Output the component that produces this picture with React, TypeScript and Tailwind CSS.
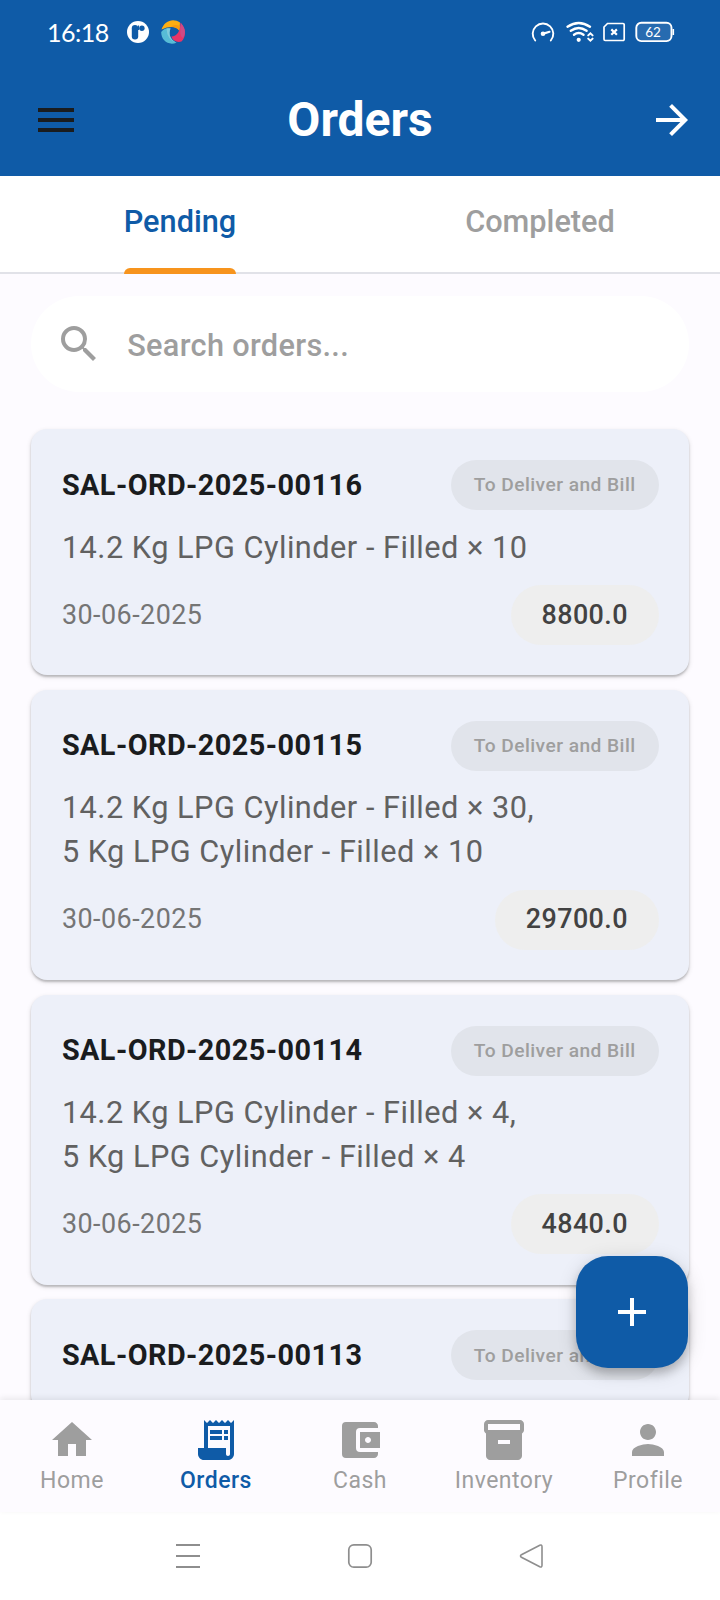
import { MdMenu, MdArrowForward, MdSearch, MdHome, MdReceiptLong, MdAccountBalanceWallet, MdInventory2, MdPerson, MdAdd } from "react-icons/md";

type Order = { id: string; items?: string[]; date?: string; total?: string };

const orders: Order[] = [
  { id: "SAL-ORD-2025-00116", items: ["14.2 Kg LPG Cylinder - Filled × 10"], date: "30-06-2025", total: "8800.0" },
  { id: "SAL-ORD-2025-00115", items: ["14.2 Kg LPG Cylinder - Filled × 30,", "5 Kg LPG Cylinder - Filled × 10"], date: "30-06-2025", total: "29700.0" },
  { id: "SAL-ORD-2025-00114", items: ["14.2 Kg LPG Cylinder - Filled × 4,", "5 Kg LPG Cylinder - Filled × 4"], date: "30-06-2025", total: "4840.0" },
  { id: "SAL-ORD-2025-00113" },
];

const navItems = [
  { label: "Home", Icon: MdHome },
  { label: "Orders", Icon: MdReceiptLong, active: true },
  { label: "Cash", Icon: MdAccountBalanceWallet },
  { label: "Inventory", Icon: MdInventory2 },
  { label: "Profile", Icon: MdPerson },
];

function StatusBar() {
  return (
    <div className="flex h-16 items-center pl-[47px] pr-[45px] text-white">
      <span className="w-[80px] font-['Lato',sans-serif] text-[25px] leading-none tracking-[-0.5px]">16:18</span>
      <svg className="h-[22px] w-[22px]" viewBox="0 0 22 22">
        <circle cx="11" cy="11" r="11" fill="#fff" />
        <rect x="4.800" y="4" width="6.400" height="14.500" rx="3.200" fill="#0f5ba7" />
        <path d="M11.500 4.500V9" stroke="#0f5ba7" strokeWidth="1.200" />
        <circle cx="14.900" cy="7.200" r="2.700" fill="#0f5ba7" />
      </svg>
      <svg className="ml-[12px] h-6 w-6" viewBox="0 0 24 24">
        <path d="M0.500 9.500C3 1 12-2.500 19 2.500L18.500 11C16 6.500 9 5.500 0.500 9.500Z" fill="#fcae12" />
        <path d="M10 6.500C13 7 16.500 8 18.500 11L19 6C15 4 12 5 10 6.500Z" fill="#f79a10" />
        <path d="M19.500 2.500C25 8 25.500 17 20.500 21.500C16 23 11.500 20.500 10.500 16.500C16 16.500 19.500 11 19.500 2.500Z" fill="#e83467" />
        <path d="M19.800 3C24.500 8 25 13 22 18C18 16 19.500 9 19.800 3Z" fill="#cf4a85" />
        <path d="M0.200 12C2.500 8.500 6 7.500 9.500 8.500C7 14 9.500 20 15.500 22.800C7 26 0 20 0.200 12Z" fill="#57bcd6" />
        <path d="M5.500 8.500Q7.500 7.900 9.500 8.500C7 14 9.500 20 15.500 22.800Q6 20 5.500 8.500Z" fill="#7fcbdc" />
      </svg>
      <div className="flex-1" />
      <svg className="h-6 w-[145px]" viewBox="0 0 145 24" fill="none" stroke="#fff" strokeWidth="1.900" strokeLinecap="round">
        <path d="M5.200 20.500A10.300 10.300 0 1 1 20.800 20.500" />
        <circle cx="13" cy="13.800" r="2.300" fill="#fff" stroke="none" />
        <path d="M13.500 13.600L19.500 11.800" strokeWidth="2.200" />
        <path d="M37.500 6.700Q48.700-0.800 60 6.700" strokeWidth="2.400" />
        <path d="M40.800 10.800Q48.700 5.300 56.600 10.800" strokeWidth="2.400" />
        <path d="M44 14.800Q48.700 11.300 53.500 14.800" strokeWidth="2.400" />
        <circle cx="48.700" cy="19.800" r="2.100" fill="#fff" stroke="none" />
        <path d="M58.200 15.400L60.400 13.300L62.600 15.400M58.200 18.600L60.400 20.700L62.600 18.600" strokeWidth="2" />
        <path d="M77.500 3.500H93a1.200 1.200 0 0 1 1.200 1.200V19.300a1.200 1.200 0 0 1-1.200 1.200H75.200a1.200 1.200 0 0 1-1.200-1.200V7Z" strokeWidth="1.700" />
        <path d="M81.300 9.400L86.900 14.800M86.900 9.400L81.300 14.800" strokeWidth="2.200" strokeLinecap="butt" />
        <rect x="106.300" y="2.800" width="35.200" height="18.300" rx="5" fill="#fff" fillOpacity="0.100" />
        <path d="M143.300 9V15" strokeWidth="1.600" strokeLinecap="butt" />
        <text x="123" y="16.800" textAnchor="middle" fontSize="13.500" fontFamily="Lato, sans-serif" fill="#fff" stroke="none">62</text>
      </svg>
    </div>
  );
}

function OrderCard({ order }: { order: Order }) {
  return (
    <article className="flex shrink-0 flex-col rounded-[16px] bg-[#edf0f9] pb-[30.400px] pl-[31.200px] pr-[30.700px] pt-[31.200px] shadow-[0_2px_2px_rgba(0,0,0,0.18),0_2px_5px_rgba(0,0,0,0.14)]">
      <div className="flex h-[50px] items-center justify-between">
        <h2 className="text-[28.800px] font-bold tracking-[0.450px] text-[#1a1c1e]">{order.id}</h2>
        <span className="flex h-[50px] items-center rounded-full bg-[#e1e4eb] px-[23px] pt-px text-[19.200px] font-medium tracking-[0.450px] text-[#9e9e9e]">
          To Deliver and Bill
        </span>
      </div>
      {order.items && (
        <div className="mt-[15.200px] text-[30.700px] leading-[44.200px] tracking-[0.500px] text-[#616161]">
          {order.items.map((item) => (
            <p key={item}>{item}</p>
          ))}
        </div>
      )}
      {order.total && (
        <div className="mt-[15px] flex h-[60px] items-center justify-between">
          <span className="text-[26.900px] tracking-[0.480px] text-[#757575]">{order.date}</span>
          <span className="flex h-[60px] items-center rounded-full bg-[#eeeeee] px-[30.700px] text-[26.900px] font-medium tracking-[0.430px] text-[#424242]">
            {order.total}
          </span>
        </div>
      )}
    </article>
  );
}

function SystemNav() {
  return (
    <div className="flex h-[88px] shrink-0 items-center justify-center gap-[144px] bg-white">
      <svg className="size-7" viewBox="0 0 28 28" fill="none" stroke="#8e8e8e" strokeWidth="2">
        <path d="M2 3H26M2 14H26M2 25H26" />
      </svg>
      <svg className="size-7" viewBox="0 0 28 28" fill="none" stroke="#8e8e8e" strokeWidth="1.700">
        <rect x="2.800" y="2.800" width="22.400" height="22.400" rx="5" />
      </svg>
      <svg className="size-7" viewBox="0 0 28 28" fill="none" stroke="#8e8e8e" strokeWidth="1.600" strokeLinejoin="round">
        <path d="M3.400 12.700L21.800 3.200Q24 2.400 24 4.800V23.200Q24 25.600 21.800 24.800L3.400 15.300Q1.600 14 3.400 12.700Z" />
      </svg>
    </div>
  );
}

export default function App() {
  return (
    <div className="flex h-[1600px] w-[720px] flex-col overflow-hidden bg-[#fdfbff] font-['Roboto',sans-serif]">
      <header className="h-[176px] shrink-0 bg-[#0f5ba7]">
        <StatusBar />
        <div className="flex h-28 items-center pl-8 pr-6">
          <MdMenu className="size-12 text-[#1a1c1e]" />
          <h1 className="flex-1 pr-2 text-center text-[48px] font-bold leading-none text-white">Orders</h1>
          <MdArrowForward className="size-12 text-white" />
        </div>
      </header>
      <div className="flex h-[98px] shrink-0 border-b-2 border-[#e1e2e8] bg-white text-[30.700px] font-medium">
        <div className="flex flex-1 justify-center">
          <div className="relative flex h-[98px] items-center pb-1.5 text-[#0f5ba7]">
            Pending
            <span className="absolute inset-x-0 bottom-0 h-1.5 rounded-t-[6px] bg-[#f7941d]" />
          </div>
        </div>
        <div className="flex h-[98px] flex-1 items-center justify-center pb-1.5 text-[#9e9e9e]">Completed</div>
      </div>
      <main className="relative flex min-h-0 flex-1 flex-col overflow-hidden px-[30.700px] pt-[22px]">
        <div className="flex h-24 shrink-0 items-center rounded-full bg-white pl-6 text-[#9e9e9e]">
          <MdSearch className="size-12" />
          <span className="ml-[24.500px] pt-[4px] text-[30.700px] font-medium tracking-[0.320px]">Search orders...</span>
        </div>
        <div className="mt-[37.200px] flex min-h-0 flex-1 flex-col gap-[14.600px]">
          {orders.map((order) => (
            <OrderCard key={order.id} order={order} />
          ))}
        </div>
        <button className="absolute bottom-8 right-8 flex size-28 items-center justify-center rounded-[32px] bg-[#0f5ba7] text-white shadow-[0_6px_10px_rgba(0,0,0,0.2),0_4px_20px_rgba(0,0,0,0.14)]">
          <MdAdd className="size-12" />
        </button>
      </main>
      <nav className="z-10 flex h-28 shrink-0 bg-[#fdfbff] pt-4 shadow-[0_-2px_6px_rgba(0,0,0,0.08)]">
        {navItems.map(({ label, Icon, active }) => (
          <div
            key={label}
            className={`flex flex-1 flex-col items-center text-[23px] tracking-[0.480px] ${active ? "font-medium text-[#0f5ba7]" : "text-[#9e9e9e]"}`}
          >
            <Icon className="size-12" />
            <span className="pt-px leading-8">{label}</span>
          </div>
        ))}
      </nav>
      <SystemNav />
    </div>
  );
}
